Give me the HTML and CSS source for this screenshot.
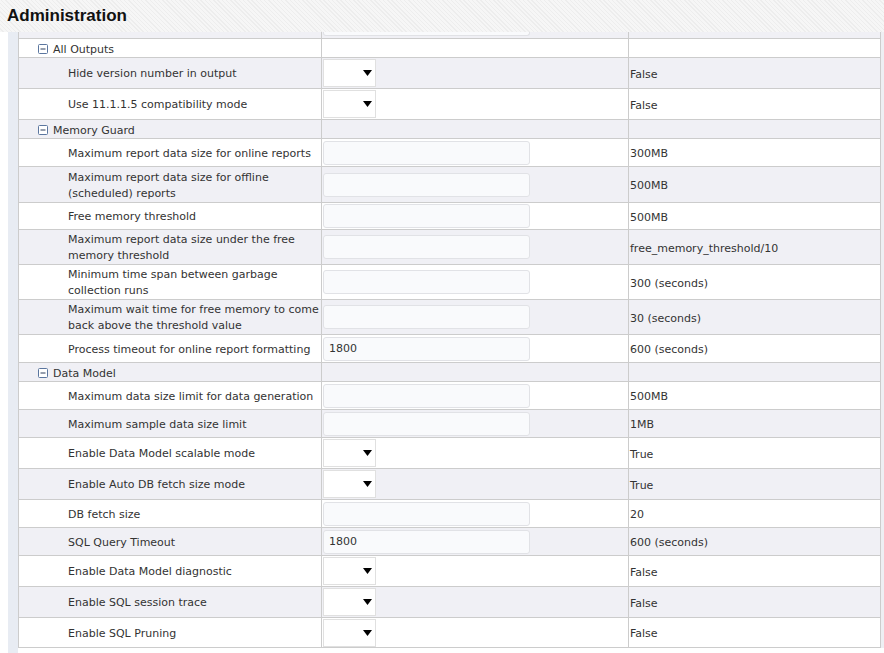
FILE: index.html
```html
<!DOCTYPE html>
<html>
<head>
<meta charset="utf-8">
<title>Administration</title>
<link rel="stylesheet" href="styles.css">
</head>
<body>
<div class="header"><h1>Administration</h1></div>
<div class="main">
  <div class="grid">
    <div class="row stub gray"><div class="c1"></div><div class="c2"><div class="tail"></div></div><div class="c3"></div></div>

    <div class="row h19 group"><div class="c1"><svg class="minus" width="10" height="10" viewBox="0 0 10 10"><rect x="0.5" y="0.5" width="9" height="9" rx="1" fill="#fff" stroke="#5b769f"/><line x1="2.5" y1="5" x2="7.5" y2="5" stroke="#2c3e5c"/></svg>All Outputs</div><div class="c2"></div><div class="c3"></div></div>
    <div class="row h31 gray"><div class="c1 label">Hide version number in output</div><div class="c2"><div class="select"><svg width="9" height="6" viewBox="0 0 9 6"><polygon points="0,0 9,0 4.5,6" fill="#000"/></svg></div></div><div class="c3">False</div></div>
    <div class="row h31"><div class="c1 label">Use 11.1.1.5 compatibility mode</div><div class="c2"><div class="select"><svg width="9" height="6" viewBox="0 0 9 6"><polygon points="0,0 9,0 4.5,6" fill="#000"/></svg></div></div><div class="c3">False</div></div>

    <div class="row h19 group gray"><div class="c1"><svg class="minus" width="10" height="10" viewBox="0 0 10 10"><rect x="0.5" y="0.5" width="9" height="9" rx="1" fill="#fff" stroke="#5b769f"/><line x1="2.5" y1="5" x2="7.5" y2="5" stroke="#2c3e5c"/></svg>Memory Guard</div><div class="c2"></div><div class="c3"></div></div>
    <div class="row h28"><div class="c1 label">Maximum report data size for online reports</div><div class="c2"><input class="text" type="text" value=""></div><div class="c3">300MB</div></div>
    <div class="row h36 gray"><div class="c1 label">Maximum report data size for offline<br>(scheduled) reports</div><div class="c2"><input class="text" type="text" value=""></div><div class="c3">500MB</div></div>
    <div class="row h27"><div class="c1 label">Free memory threshold</div><div class="c2"><input class="text" type="text" value=""></div><div class="c3">500MB</div></div>
    <div class="row h35 gray"><div class="c1 label">Maximum report data size under the free<br>memory threshold</div><div class="c2"><input class="text" type="text" value=""></div><div class="c3">free_memory_threshold/10</div></div>
    <div class="row h35"><div class="c1 label">Minimum time span between garbage<br>collection runs</div><div class="c2"><input class="text" type="text" value=""></div><div class="c3">300 (seconds)</div></div>
    <div class="row h35 gray"><div class="c1 label">Maximum wait time for free memory to come<br>back above the threshold value</div><div class="c2"><input class="text" type="text" value=""></div><div class="c3">30 (seconds)</div></div>
    <div class="row h28"><div class="c1 label">Process timeout for online report formatting</div><div class="c2"><input class="text" type="text" value="1800"></div><div class="c3">600 (seconds)</div></div>

    <div class="row h19 group gray"><div class="c1"><svg class="minus" width="10" height="10" viewBox="0 0 10 10"><rect x="0.5" y="0.5" width="9" height="9" rx="1" fill="#fff" stroke="#5b769f"/><line x1="2.5" y1="5" x2="7.5" y2="5" stroke="#2c3e5c"/></svg>Data Model</div><div class="c2"></div><div class="c3"></div></div>
    <div class="row h28"><div class="c1 label">Maximum data size limit for data generation</div><div class="c2"><input class="text" type="text" value=""></div><div class="c3">500MB</div></div>
    <div class="row h28 gray"><div class="c1 label">Maximum sample data size limit</div><div class="c2"><input class="text" type="text" value=""></div><div class="c3">1MB</div></div>
    <div class="row h31"><div class="c1 label">Enable Data Model scalable mode</div><div class="c2"><div class="select"><svg width="9" height="6" viewBox="0 0 9 6"><polygon points="0,0 9,0 4.5,6" fill="#000"/></svg></div></div><div class="c3">True</div></div>
    <div class="row h31 gray"><div class="c1 label">Enable Auto DB fetch size mode</div><div class="c2"><div class="select"><svg width="9" height="6" viewBox="0 0 9 6"><polygon points="0,0 9,0 4.5,6" fill="#000"/></svg></div></div><div class="c3">True</div></div>
    <div class="row h28"><div class="c1 label">DB fetch size</div><div class="c2"><input class="text" type="text" value=""></div><div class="c3">20</div></div>
    <div class="row h28 gray"><div class="c1 label">SQL Query Timeout</div><div class="c2"><input class="text" type="text" value="1800"></div><div class="c3">600 (seconds)</div></div>
    <div class="row h31"><div class="c1 label">Enable Data Model diagnostic</div><div class="c2"><div class="select"><svg width="9" height="6" viewBox="0 0 9 6"><polygon points="0,0 9,0 4.5,6" fill="#000"/></svg></div></div><div class="c3">False</div></div>
    <div class="row h31 gray"><div class="c1 label">Enable SQL session trace</div><div class="c2"><div class="select"><svg width="9" height="6" viewBox="0 0 9 6"><polygon points="0,0 9,0 4.5,6" fill="#000"/></svg></div></div><div class="c3">False</div></div>
    <div class="row h30"><div class="c1 label">Enable SQL Pruning</div><div class="c2"><div class="select"><svg width="9" height="6" viewBox="0 0 9 6"><polygon points="0,0 9,0 4.5,6" fill="#000"/></svg></div></div><div class="c3">False</div></div>
  </div>
</div>
</body>
</html>
```

FILE: styles.css
```css
html, body {
  margin: 0;
  padding: 0;
  background: #fff;
}
body {
  font-family: "DejaVu Sans", Verdana, sans-serif;
  font-size: 11px;
  color: #333;
  width: 884px;
  height: 653px;
  overflow: hidden;
}
.header {
  height: 32px;
  box-sizing: border-box;
  padding-left: 7px;
  display: flex;
  align-items: center;
  background: repeating-linear-gradient(45deg, #f6f6f6 0, #f6f6f6 2px, #ededed 2px, #ededed 3px);
}
.header h1 {
  margin: 0;
  font-family: "Liberation Sans", Arial, sans-serif;
  font-weight: bold;
  font-size: 17px;
  color: #111;
  letter-spacing: 0;
}
.main {
  margin-left: 8px;
  border-left: 10px solid #e8ecf3;
  height: 621px;
}
.grid {
  width: 863px;
  box-sizing: border-box;
  border-left: 1px solid #ccc;
  border-right: 1px solid #ccc;
  box-shadow: 3px 0 0 #eeeff3;
}
.row {
  display: grid;
  grid-template-columns: 303px 307px 1fr;
  box-sizing: border-box;
  border-bottom: 1px solid #ccc;
  background: #fff;
}
.row.gray {
  background: #f0f0f5;
}
.row > div {
  display: flex;
  align-items: center;
  box-sizing: border-box;
  min-width: 0;
}
.c1, .c2 {
  border-right: 1px solid #ccc;
}
.row > .c1,
.row > .c3 {
  padding-top: 2px;
}
.c1.label {
  padding-left: 49px;
  line-height: 16px;
  white-space: nowrap;
}
.group .c1 {
  padding-left: 19px;
}
.minus {
  margin-right: 5px;
  flex: none;
}
.c2 {
  padding-left: 1px;
}
.c3 {
  padding-left: 1px;
}
.stub { height: 7px; }
.stub .c2 { align-items: flex-start; }
.tail {
  width: 207px;
  height: 4px;
  box-sizing: border-box;
  border: 1px solid #e1e2e6;
  border-top: none;
  border-radius: 0 0 3px 3px;
  background: #f9fafc;
}
.h19 { height: 19px; }
.h27 { height: 27px; }
.h28 { height: 28px; }
.h30 { height: 30px; }
.h31 { height: 31px; }
.h35 { height: 35px; }
.h36 { height: 36px; }
input.text {
  width: 207px;
  height: 24px;
  box-sizing: border-box;
  margin: 0;
  padding: 0 0 0 5px;
  border: 1px solid #e1e2e6;
  border-radius: 3px;
  background: #f9fafc;
  font-family: "DejaVu Sans", Verdana, sans-serif;
  font-size: 11px;
  color: #333;
  outline: none;
}
.select {
  width: 53px;
  height: 28px;
  box-sizing: border-box;
  border: 1px solid #e0e0e0;
  background: #fff;
  display: flex;
  align-items: center;
  justify-content: flex-end;
  padding-right: 3px;
}
.select svg {
  display: block;
}
```
